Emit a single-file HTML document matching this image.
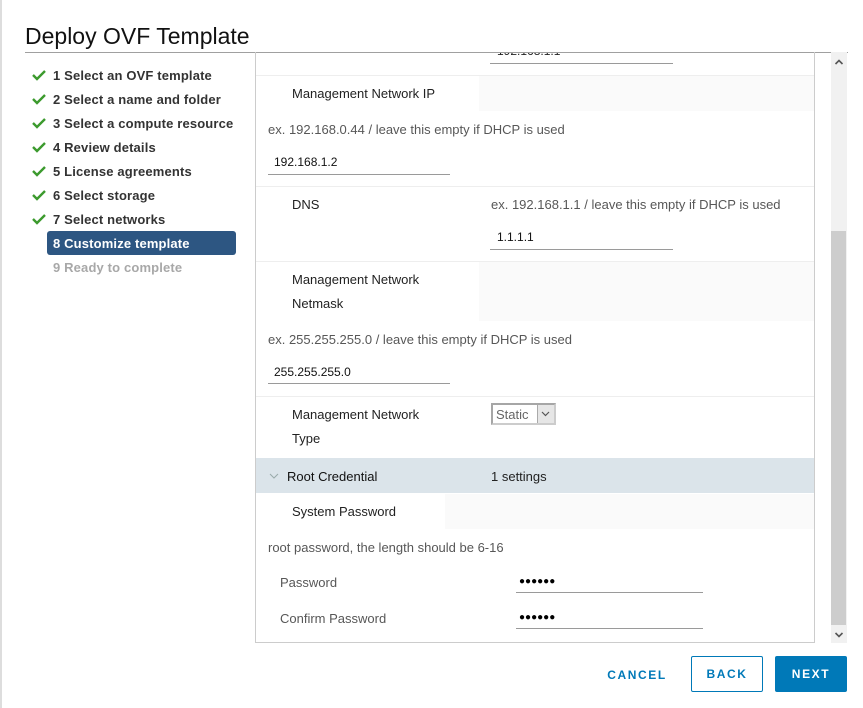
<!DOCTYPE html>
<html><head><meta charset="utf-8"><style>
*{margin:0;padding:0;box-sizing:border-box}
body{width:863px;height:708px;background:#fff;position:relative;overflow:hidden;font-family:"Liberation Sans",sans-serif;font-size:13px;color:#313131}
.a{position:absolute;white-space:nowrap;line-height:16px}
.t{transform:translateY(-7px)}
.nav{font-weight:bold;color:#333;font-size:13px;letter-spacing:0.15px}
.chk{position:absolute}
.lbl{color:#222}
.desc{color:#575757}
.ul{position:absolute;height:1px;background:#9a9a9a}
.bd{position:absolute;left:256px;width:558px;height:1px;background:#eee}
.gb{position:absolute;background:#fafafa}
.btn{position:absolute;font-size:12px;font-weight:bold;letter-spacing:1.6px;text-align:center;line-height:35px;color:#0079b8}
</style></head><body>
<div style="position:absolute;left:0;top:0;width:2px;height:708px;background:#ddd"></div>
<div class="a" style="left:25px;top:22px;font-size:23px;line-height:28px;color:#111">Deploy OVF Template</div>
<div style="position:absolute;left:25px;top:52px;width:823px;height:1px;background:#a0a0a0"></div>

<div style="position:absolute;left:47px;top:231px;width:189px;height:24px;background:#2d5682;border-radius:3px"></div>
<svg class="chk" style="left:32px;top:69px" width="14" height="170" viewBox="0 0 14 170">
<g fill="none" stroke="#3c9a2e" stroke-width="2.4">
<path d="M1 6l4 4 8-8"/><path d="M1 30l4 4 8-8"/><path d="M1 54l4 4 8-8"/><path d="M1 78l4 4 8-8"/><path d="M1 102l4 4 8-8"/><path d="M1 126l4 4 8-8"/><path d="M1 150l4 4 8-8"/>
</g></svg>
<div class="a t nav" style="left:53px;top:75px">1 Select an OVF template</div>
<div class="a t nav" style="left:53px;top:99px">2 Select a name and folder</div>
<div class="a t nav" style="left:53px;top:123px">3 Select a compute resource</div>
<div class="a t nav" style="left:53px;top:147px">4 Review details</div>
<div class="a t nav" style="left:53px;top:171px">5 License agreements</div>
<div class="a t nav" style="left:53px;top:195px">6 Select storage</div>
<div class="a t nav" style="left:53px;top:219px">7 Select networks</div>
<div class="a t nav" style="left:53px;top:243px;color:#fff">8 Customize template</div>
<div class="a t nav" style="left:53px;top:267px;color:#a8a8a8">9 Ready to complete</div>

<div style="position:absolute;left:255px;top:52px;width:560px;height:591px;border-left:1px solid #ccc;border-right:1px solid #ccc;border-bottom:1px solid #ccc"></div>
<div class="a" style="left:497px;top:43px;font-size:12px;color:#222;clip-path:inset(10px 0 0 0)">192.168.1.1</div>
<div class="ul" style="left:490px;top:63px;width:183px"></div>
<div class="bd" style="top:75px"></div>
<div class="gb" style="left:479px;top:76px;width:335px;height:35px"></div>
<div class="a t lbl" style="left:292px;top:93px">Management Network IP</div>
<div class="a t desc" style="left:268px;top:129px">ex. 192.168.0.44 / leave this empty if DHCP is used</div>
<div class="a t" style="left:274px;top:161px;font-size:12px;color:#111">192.168.1.2</div>
<div class="ul" style="left:268px;top:174px;width:182px"></div>
<div class="bd" style="top:186px"></div>
<div class="a t lbl" style="left:292px;top:204px">DNS</div>
<div class="a t desc" style="left:491px;top:204px">ex. 192.168.1.1 / leave this empty if DHCP is used</div>
<div class="a t" style="left:497px;top:236px;font-size:12px;color:#111">1.1.1.1</div>
<div class="ul" style="left:490px;top:249px;width:183px"></div>
<div class="bd" style="top:261px"></div>
<div class="gb" style="left:479px;top:262px;width:335px;height:59px"></div>
<div class="a t lbl" style="left:292px;top:279px">Management Network</div>
<div class="a t lbl" style="left:292px;top:303px">Netmask</div>
<div class="a t desc" style="left:268px;top:339px">ex. 255.255.255.0 / leave this empty if DHCP is used</div>
<div class="a t" style="left:274px;top:371px;font-size:12px;color:#111">255.255.255.0</div>
<div class="ul" style="left:268px;top:383px;width:182px"></div>
<div class="bd" style="top:396px"></div>
<div class="a t lbl" style="left:292px;top:414px">Management Network</div>
<div class="a t lbl" style="left:292px;top:438px">Type</div>
<div style="position:absolute;left:491px;top:403px;width:65px;height:22px;border:2px solid #a6a6a6;border-right-color:#ccc;border-bottom-color:#ccc;background:#fff"></div>
<div class="a t" style="left:496px;top:414px;color:#666">Static</div>
<div style="position:absolute;left:537px;top:405px;width:17px;height:18px;background:#e6e6e6;border-left:1px solid #aaa"></div>
<svg style="position:absolute;left:541px;top:410px" width="9" height="8"><path d="M1 2l3.5 3.5L8 2" fill="none" stroke="#555" stroke-width="1.2"/></svg>
<div style="position:absolute;left:256px;top:458px;width:558px;height:35px;background:#dbe4ea"></div>
<svg style="position:absolute;left:269px;top:473px" width="10" height="7"><path d="M1 1l4 4 4-4" fill="none" stroke="#9aa" stroke-width="1"/></svg>
<div class="a t" style="left:287px;top:476px;color:#111">Root Credential</div>
<div class="a t" style="left:491px;top:476px;color:#222">1 settings</div>
<div class="gb" style="left:445px;top:494px;width:369px;height:35px"></div>
<div class="a t lbl" style="left:292px;top:511px">System Password</div>
<div class="a t desc" style="left:268px;top:547px">root password, the length should be 6-16</div>
<div class="a t desc" style="left:280px;top:582px">Password</div>
<div class="a t" style="left:519px;top:581px;font-size:10px;color:#000;letter-spacing:0px">●●●●●●</div>
<div class="ul" style="left:516px;top:592px;width:187px"></div>
<div class="a t desc" style="left:280px;top:618px">Confirm Password</div>
<div class="a t" style="left:519px;top:617px;font-size:10px;color:#000;letter-spacing:0px">●●●●●●</div>
<div class="ul" style="left:516px;top:628px;width:187px"></div>

<div style="position:absolute;left:831px;top:52px;width:16px;height:591px;background:#f1f1f1"></div>
<div style="position:absolute;left:831px;top:231px;width:15px;height:394px;background:#cdcdcd"></div>
<svg style="position:absolute;left:834px;top:58px" width="10" height="8"><path d="M1.5 6L5 2.5 8.5 6" fill="none" stroke="#555" stroke-width="1.6"/></svg>
<svg style="position:absolute;left:834px;top:631px" width="10" height="8"><path d="M1.5 2L5 5.5 8.5 2" fill="none" stroke="#555" stroke-width="1.6"/></svg>

<div class="btn" style="left:598px;top:658px;width:78px">CANCEL</div>
<div class="btn" style="left:691px;top:656px;width:72px;height:36px;border:1px solid #0079b8;border-radius:2px;line-height:35px">BACK</div>
<div class="btn" style="left:775px;top:656px;width:72px;height:36px;background:#0079b8;color:#fff;border-radius:2px;line-height:37px">NEXT</div>
</body></html>
